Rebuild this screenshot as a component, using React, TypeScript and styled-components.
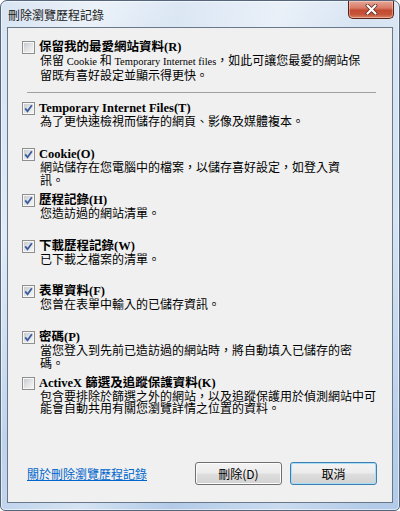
import React from "react";
import styled, { createGlobalStyle } from "styled-components";

const GlobalStyle = createGlobalStyle`
  html, body {
    margin: 0;
    padding: 0;
    background: #ffffff;
  }
  body {
    width: 400px;
    height: 511px;
    overflow: hidden;
    font-family: "Noto Sans CJK TC", sans-serif;
  }
`;

const Window = styled.div`
  box-sizing: border-box;
  width: 400px;
  height: 511px;
  display: flex;
  flex-direction: column;
  padding: 0 6px 7px 6px;
  border: 1px solid #55667c;
  border-radius: 7px 7px 5px 5px;
  overflow: hidden;
  background:
    linear-gradient(
      112deg,
      rgba(255, 255, 255, 0) 0%,
      rgba(255, 255, 255, 0.5) 16%,
      rgba(255, 255, 255, 0.1) 30%,
      rgba(255, 255, 255, 0.45) 47%,
      rgba(255, 255, 255, 0) 62%,
      rgba(255, 255, 255, 0.3) 80%,
      rgba(255, 255, 255, 0) 95%
    ),
    linear-gradient(180deg, #d9e5f3 0%, #c6d9ef 35%, #b3cbe8 100%);
  box-shadow: inset 0 0 0 1px rgba(255, 255, 255, 0.55);
`;

const TitleBar = styled.div`
  height: 26px;
  flex-shrink: 0;
  display: flex;
  align-items: flex-start;
  justify-content: space-between;
  padding-left: 1px;
`;

const TitleText = styled.span`
  font-size: 12px;
  line-height: 27px;
  color: #1b1b1b;
`;

const CloseButton = styled.div`
  box-sizing: border-box;
  width: 46px;
  height: 18px;
  margin-right: -1px;
  display: flex;
  align-items: center;
  justify-content: center;
  border: 1px solid #5c2219;
  border-top: none;
  border-radius: 0 0 5px 5px;
  background: linear-gradient(
    180deg,
    #e7a596 0%,
    #d97c68 40%,
    #c34a30 55%,
    #c6553a 80%,
    #dd8566 100%
  );
  box-shadow: inset 0 0 0 1px rgba(255, 255, 255, 0.35);
`;

const Client = styled.div`
  box-sizing: border-box;
  flex: 1;
  display: flex;
  flex-direction: column;
  border: 1px solid #69778a;
  background: #f0f0f0;
`;

const List = styled.div`
  display: flex;
  flex-direction: column;
  padding: 13px 0 0 14px;
`;

const Item = styled.div`
  height: 45.75px;
  display: grid;
  grid-template-columns: 13px auto;
  grid-template-rows: 13px auto;
  column-gap: 4px;
  align-content: start;
`;

const Box = styled.span`
  box-sizing: border-box;
  width: 13px;
  height: 13px;
  display: flex;
  align-items: center;
  justify-content: center;
  border: 1px solid #8e8f8f;
  background: linear-gradient(135deg, #c2c6cc 0%, #e4e5e7 55%, #f7f7f7 100%);
  box-shadow: inset 0 0 0 1px #f6f6f6;
`;

const Title = styled.span`
  font-family: "Liberation Serif", "Noto Sans CJK TC", serif;
  font-weight: 700;
  font-size: 12.5px;
  line-height: 13px;
  color: #000;
  white-space: nowrap;
`;

const Desc = styled.div`
  grid-column: 2;
  padding-left: 1px;
  font-family: "Noto Sans CJK TC", sans-serif;
  font-size: 12px;
  line-height: 12.5px;
  color: #000;
  white-space: nowrap;
`;

const Latin = styled.span`
  font-family: "Liberation Serif", serif;
  font-size: 10.5px;
`;

const Separator = styled.div`
  height: 1px;
  margin: 5.5px 16px 9px 5px;
  background: #a0a0a0;
`;

const Footer = styled.div`
  margin-top: auto;
  display: flex;
  align-items: center;
  gap: 8px;
  padding: 0 15px 17px 19px;
`;

const HelpLink = styled.a`
  margin-right: auto;
  font-size: 12px;
  line-height: 14px;
  color: #0066cc;
  text-decoration: underline;
  cursor: pointer;
`;

const Button = styled.button<{ $default?: boolean }>`
  box-sizing: border-box;
  width: 87px;
  height: 23px;
  padding: 0;
  font-family: "Noto Sans CJK TC", sans-serif;
  font-size: 12px;
  color: #000;
  border: 1px solid ${(p) => (p.$default ? "#3c7fb1" : "#707070")};
  border-radius: 3px;
  background: linear-gradient(
    180deg,
    #f3f3f3 0%,
    #ececec 48%,
    #dedede 52%,
    #d2d2d2 100%
  );
  box-shadow: inset 0 0 0 1px
    ${(p) => (p.$default ? "#a9dcf5" : "#fcfcfc")};
`;

const Checkbox = ({ checked }: { checked: boolean }) => (
  <Box>
    {checked && (
      <svg width="9" height="9" viewBox="0 0 9 9">
        <path
          d="M1.2 4.4 L3.5 7.2 L7.9 1.3"
          fill="none"
          stroke="#3b5b9c"
          strokeWidth="1.8"
        />
      </svg>
    )}
  </Box>
);

interface Option {
  title: string;
  lines: React.ReactNode[];
  checked: boolean;
}

const options: Option[] = [
  {
    title: "Temporary Internet Files(T)",
    lines: ["為了更快速檢視而儲存的網頁、影像及媒體複本。"],
    checked: true,
  },
  {
    title: "Cookie(O)",
    lines: ["網站儲存在您電腦中的檔案，以儲存喜好設定，如登入資", "訊。"],
    checked: true,
  },
  { title: "歷程記錄(H)", lines: ["您造訪過的網站清單。"], checked: true },
  { title: "下載歷程記錄(W)", lines: ["已下載之檔案的清單。"], checked: true },
  { title: "表單資料(F)", lines: ["您曾在表單中輸入的已儲存資訊。"], checked: true },
  {
    title: "密碼(P)",
    lines: ["當您登入到先前已造訪過的網站時，將自動填入已儲存的密", "碼。"],
    checked: true,
  },
  {
    title: "ActiveX 篩選及追蹤保護資料(K)",
    lines: [
      "包含要排除於篩選之外的網站，以及追蹤保護用於偵測網站中可",
      "能會自動共用有關您瀏覽詳情之位置的資料。",
    ],
    checked: false,
  },
];

const OptionRow = ({ title, lines, checked }: Option) => (
  <Item>
    <Checkbox checked={checked} />
    <Title>{title}</Title>
    <Desc>
      {lines.map((l, idx) => (
        <React.Fragment key={idx}>
          {idx > 0 && <br />}
          {l}
        </React.Fragment>
      ))}
    </Desc>
  </Item>
);

const App = () => {
  return (
    <>
      <GlobalStyle />
      <Window>
        <TitleBar>
          <TitleText>刪除瀏覽歷程記錄</TitleText>
          <CloseButton>
            <svg width="13" height="11" viewBox="0 0 13 11">
              <path
                d="M2.5 1.5 L10.5 9.5 M10.5 1.5 L2.5 9.5"
                stroke="#5a2a22"
                strokeWidth="3.8"
                strokeLinecap="round"
              />
              <path
                d="M2.5 1.5 L10.5 9.5 M10.5 1.5 L2.5 9.5"
                stroke="#ffffff"
                strokeWidth="2.2"
                strokeLinecap="round"
              />
            </svg>
          </CloseButton>
        </TitleBar>
        <Client>
          <List>
            <OptionRow
              title="保留我的最愛網站資料(R)"
              checked={false}
              lines={[
                <>
                  保留 <Latin>Cookie</Latin> 和 <Latin>Temporary Internet files</Latin>
                  ，如此可讓您最愛的網站保
                </>,
                "留既有喜好設定並顯示得更快。",
              ]}
            />
            <Separator />
            {options.map((o) => (
              <OptionRow key={o.title} {...o} />
            ))}
          </List>
          <Footer>
            <HelpLink>關於刪除瀏覽歷程記錄</HelpLink>
            <Button>刪除(D)</Button>
            <Button $default>取消</Button>
          </Footer>
        </Client>
      </Window>
    </>
  );
};

export default App;
